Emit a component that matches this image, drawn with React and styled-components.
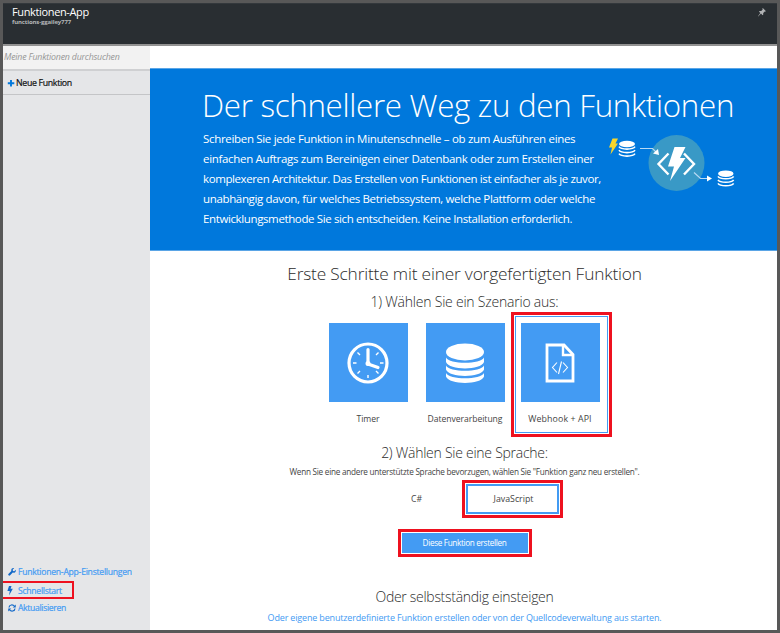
import React from 'react';
import styled, { createGlobalStyle } from 'styled-components';

const Global = createGlobalStyle`
  * { box-sizing: border-box; }
  html, body { margin: 0; padding: 0; }
  body { font-family: "Open Sans", "Noto Sans", sans-serif; background: #fff; overflow: hidden; }
  svg { display: block; flex: none; }
`;

const BLUE = '#0078dc';
const TILE = '#439bf3';
const RED = '#ee111f';

const Blade = styled.div`
  width: 780px;
  height: 633px;
  display: flex;
  flex-direction: column;
  border: 3px solid #585858;
  background: #fff;
`;

const Text = styled.span`
  display: block;
  white-space: nowrap;
  font-size: ${p => p.$size}px;
  line-height: ${p => p.$lh || 12}px;
  letter-spacing: ${p => p.$track || 0}px;
`;

const Header = styled.header`
  height: 43px;
  flex: none;
  display: flex;
  justify-content: space-between;
  padding: 1px 11px 0 9px;
  background: #292e32;
  border-top: 1px solid #33383c;
  border-bottom: 2px solid #929292;
  color: #fff;
`;

const AppName = styled(Text)`
  color: #b4b6b8;
  font-weight: 700;
`;

const Pin = styled.svg`
  margin-top: 3px;
`;

const Body = styled.div`
  flex: 1;
  display: flex;
  min-height: 0;
`;

const Sidebar = styled.nav`
  width: 147px;
  flex: none;
  display: flex;
  flex-direction: column;
  background: #e5e6e8;
`;

const Search = styled.div`
  height: 25px;
  padding: 5px 0 0 1px;
  background: #f2f2f2;
  border-bottom: 2px solid #cfd0d2;
  color: #969696;
  font-style: italic;
`;

const NewFunction = styled.div`
  height: 24px;
  display: flex;
  align-items: center;
  gap: 1px;
  padding-left: 4px;
  border-bottom: 1px solid #c4c5c7;
  color: #111;
  -webkit-text-stroke: 0.2px #111;
`;

const SideLinks = styled.div`
  margin-top: auto;
  padding-bottom: 13px;
  color: ${TILE};
  -webkit-text-stroke: 0.2px ${TILE};
`;

const SideLink = styled.div`
  height: 18px;
  width: ${p => (p.$marked ? '71px' : 'auto')};
  display: flex;
  align-items: center;
  gap: ${p => (p.$marked ? 3 : 2)}px;
  padding-left: ${p => (p.$marked ? 4 : 5)}px;
  ${p => p.$marked && `
    border: 2px solid ${RED};
    border-left: 0;
    padding-top: 2px;
  `}
`;

const Main = styled.main`
  flex: 1;
  display: flex;
  flex-direction: column;
  padding-top: 22px;
`;

const Banner = styled.section`
  height: 183px;
  flex: none;
  padding: 15px 0 0 52px;
  background: ${BLUE};
  border-top: 1px solid #5aa5e6;
  border-bottom: 1px solid #5aa5e6;
  color: #fff;
`;

const BannerTitle = styled(Text)`
  font-weight: 300;
`;

const BannerRow = styled.div`
  display: flex;
  padding-left: 1px;
`;

const Pitch = styled.div`
  width: 402px;
  padding-top: 3px;
`;

const Illustration = styled.svg`
  margin-top: 4px;
`;

const Steps = styled.section`
  display: flex;
  flex-direction: column;
  align-items: center;
  padding-left: 2px;
  color: #444;
`;

const Heading = styled(Text)`
  margin-top: ${p => p.$top}px;
  font-weight: 300;
  color: #2c2c2c;
`;

const Hint = styled(Text)`
  margin-top: 3px;
`;

const Scenarios = styled.div`
  height: 125px;
  display: flex;
  align-items: flex-start;
  margin-left: 11px;
`;

const Scenario = styled.div`
  width: 79px;
  margin: 11px ${p => p.$gap}px 0 0;
  display: flex;
  flex-direction: column;
  align-items: center;
  gap: 11px;
`;

const Marked = styled.div`
  width: 101px;
  height: 125px;
  padding: 1px;
  border: 3px solid ${RED};
`;

const Selected = styled.div`
  height: 100%;
  border: 1px solid ${TILE};
  padding: 6px 0 0 5px;
  ${Scenario} { margin: 0; }
`;

const Tile = styled.div`
  width: 79px;
  height: 79px;
  display: flex;
  align-items: center;
  justify-content: center;
  background: ${TILE};
`;

const Languages = styled.div`
  display: flex;
  align-items: center;
  gap: 40px;
  margin: 2px 0 0 45px;
`;

const MarkedLanguage = styled.div`
  width: 101px;
  height: 38px;
  padding: 1px;
  border: 3px solid ${RED};
`;

const SelectedLanguage = styled.div`
  height: 100%;
  border: 2px solid ${TILE};
  display: flex;
  align-items: center;
  justify-content: center;
  padding-left: 2px;
`;

const MarkedButton = styled.div`
  width: 134px;
  height: 28px;
  margin: 11px 0 0;
  padding: 1px;
  border: 3px solid ${RED};
`;

const CreateButton = styled.button`
  width: 100%;
  height: 100%;
  display: flex;
  align-items: center;
  justify-content: center;
  border: 0;
  padding: 0;
  background: ${TILE};
  color: #fff;
  font-family: inherit;
`;

const CustomLink = styled(Text)`
  margin-top: 5px;
  color: ${TILE};
`;

const Stack = () => (
  <svg width="38" height="40" viewBox="0 0 38 40" fill="#fff">
    <ellipse cx="19" cy="9" rx="19" ry="8.5" />
    <path d="M0 14.5c3 7 35 7 38 0v4.5c-3 8.500-35 8.500-38 0z" />
    <path d="M0 22.500c3 7 35 7 38 0v4c-3 8.500-35 8.500-38 0z" />
    <path d="M0 30c3 7 35 7 38 0v3.500c-3 8.500-35 8.500-38 0z" />
  </svg>
);

const Clock = () => (
  <svg width="42" height="42" viewBox="0 0 42 42" fill="none" stroke="#fff">
    <circle cx="21" cy="21" r="19" strokeWidth="3.2" />
    <path d="M21 7.500V22L31 25.500" strokeWidth="3.2" strokeLinecap="round" strokeLinejoin="round" />
    <circle cx="21" cy="21.500" r="1.500" strokeWidth="2" />
    <path d="M6 21h3.500M33 21h3.500M21 33v3M10.500 10.500l2.500 2.500M31.500 10.500l-2.500 2.500M10.500 31.500l2.500-2.500M31.500 31.500l-2.500-2.500" strokeWidth="1.400" />
  </svg>
);

const CodeFile = () => (
  <svg width="30" height="40" viewBox="0 0 30 40" fill="none" stroke="#fff">
    <path d="M2 2H19L28 11.500V38H2Z" strokeWidth="2.800" />
    <path d="M18 2V12H28" strokeWidth="2.400" />
    <path d="M12 19.500L7.500 24.500L12 29.500M18 19.500L22.500 24.500L18 29.500M16.500 18.500L13.500 31" strokeWidth="1.100" />
  </svg>
);

const Flow = () => (
  <Illustration width="130" height="70" viewBox="605 130 130 70">
    <path d="M612.500 138.500H618L615.500 143.500H618L610.500 154.500L612 147.500H609Z" fill="#f8d62b" />
    <g fill="#fff">
      <ellipse cx="627" cy="144" rx="8" ry="3.300" />
      <ellipse cx="725.800" cy="173.700" rx="7.700" ry="3.300" />
    </g>
    <g fill="none" stroke="#fff" strokeWidth="1.600">
      <path d="M619 146.700c2 3.200 14 3.200 16 0M619 150.200c2 3.200 14 3.200 16 0M619 153.700c2 3.200 14 3.200 16 0" />
      <path d="M718 176.400c2 3.200 13.600 3.200 15.600 0M718 179.900c2 3.200 13.600 3.200 15.600 0M718 183.400c2 3.200 13.600 3.200 15.600 0" />
    </g>
    <circle cx="676.500" cy="163" r="28" fill="#3999c6" />
    <path d="M640 148.500H652.500L656 152" fill="none" stroke="#b8daf4" strokeWidth="1.200" />
    <path d="M658 149L659 155L653 153.500Z" fill="#fff" />
    <path d="M694 172.500L700.500 178.500H707" fill="none" stroke="#b8daf4" strokeWidth="1.200" />
    <path d="M707 175.500L712 178.500L707 181.500Z" fill="#fff" />
    <path d="M668.500 153.500L658.500 164L668.500 174.500M684 153.500L694 164L684 174.500" fill="none" stroke="#fff" strokeWidth="2.400" />
    <path d="M674.500 147H685.500L680 158H685.500L670 181L674 166.500H668Z" fill="#fff" />
  </Illustration>
);

const PITCH = [
  ['Schreiben Sie jede Funktion in Minutenschnelle – ob zum Ausführen eines', -0.317],
  ['einfachen Auftrags zum Bereinigen einer Datenbank oder zum Erstellen einer', -0.317],
  ['komplexeren Architektur. Das Erstellen von Funktionen ist einfacher als je zuvor,', -0.4],
  ['unabhängig davon, für welches Betriebssystem, welche Plattform oder welche', -0.345],
  ['Entwicklungsmethode Sie sich entscheiden. Keine Installation erforderlich.', -0.377],
];

export default function App() {
  return (
    <Blade>
      <Global />
      <Header>
        <div>
          <Text $size={11} $lh={14} $track={-0.36}>Funktionen-App</Text>
          <AppName $size={6} $lh={7} $track={-0.13}>functions-ggailey777</AppName>
        </div>
        <Pin width="8" height="9" viewBox="0 0 8 9" fill="#b0b2b4">
          <path d="M4.800 0L8 3.200L7.300 3.600L6.800 3.400L5.200 5L5.200 6.800L4.600 7.200L3 5.600L0.200 8.600L0 8.300L2.300 5L1 3.500L1.500 3L3.200 3L4.700 1.400L4.400 0.600Z" />
        </Pin>
      </Header>
      <Body>
        <Sidebar>
          <Search>
            <Text $size={8.8} $track={-0.2}>Meine Funktionen durchsuchen</Text>
          </Search>
          <NewFunction>
            <svg width="8" height="8" viewBox="0 0 8 8">
              <path d="M4 1V7.500M0.800 4.200H7.300" stroke={BLUE} strokeWidth="1.900" />
            </svg>
            <Text $size={8.8} $track={-0.33}>Neue Funktion</Text>
          </NewFunction>
          <SideLinks>
            <SideLink>
              <svg width="8" height="8" viewBox="0 0 16 16" fill="#1268c8">
                <path d="M15.500 3.500L12.500 6.300L9.800 5.800L9.500 3.200L12.300.500C9.500-.500 6.300 1.500 6.500 5L6.700 6.200L.700 12C-.500 13.500 2 16.200 3.800 15L9.500 9.200C13 10.500 16.500 7.500 15.500 3.500Z" />
              </svg>
              <Text $size={8.6} $track={-0.24}>Funktionen-App-Einstellungen</Text>
            </SideLink>
            <SideLink $marked>
              <svg width="8" height="10" viewBox="0 0 8 10" fill="#1268c8">
                <path d="M2 0H4.500L3.600 2.800H5.800L2 9.500L2.800 5H0.400Z" />
              </svg>
              <Text $size={8.6} $track={-0.26}>Schnellstart</Text>
            </SideLink>
            <SideLink>
              <svg width="8" height="8" viewBox="0 0 16 16" fill="none" stroke="#1268c8" strokeWidth="2.400">
                <path d="M2 7C2.500 1 10 .500 13 4.500M14 9C13.500 15 6 15.500 3 11.500" />
                <path d="M15.500 1V7H9.500ZM.500 15V9H6.500Z" fill="#1268c8" stroke="none" />
              </svg>
              <Text $size={8.6} $track={-0.32}>Aktualisieren</Text>
            </SideLink>
          </SideLinks>
        </Sidebar>
        <Main>
          <Banner>
            <BannerTitle $size={31.3} $lh={42} $track={-0.3}>Der schnellere Weg zu den Funktionen</BannerTitle>
            <BannerRow>
              <Pitch>
                {PITCH.map(([line, track]) => (
                  <Text key={line} $size={11.5} $lh={20} $track={track}>{line}</Text>
                ))}
              </Pitch>
              <Flow />
            </BannerRow>
          </Banner>
          <Steps>
            <Heading $top={11} $size={17.3} $lh={24} $track={-0.17}>Erste Schritte mit einer vorgefertigten Funktion</Heading>
            <Heading $top={6} $size={14} $lh={20} $track={-0.22}>1) Wählen Sie ein Szenario aus:</Heading>
            <Scenarios>
              <Scenario $gap={18}>
                <Tile><Clock /></Tile>
                <Text $size={8.6} $track={-0.04}>Timer</Text>
              </Scenario>
              <Scenario $gap={6}>
                <Tile><Stack /></Tile>
                <Text $size={8.6} $track={-0.04}>Datenverarbeitung</Text>
              </Scenario>
              <Marked>
                <Selected>
                  <Scenario>
                    <Tile><CodeFile /></Tile>
                    <Text $size={8.8} $track={0.1}>Webhook + API</Text>
                  </Scenario>
                </Selected>
              </Marked>
            </Scenarios>
            <Heading $top={6} $size={14} $lh={20} $track={-0.26}>2) Wählen Sie eine Sprache:</Heading>
            <Hint $size={8.2} $track={-0.25}>Wenn Sie eine andere unterstützte Sprache bevorzugen, wählen Sie "Funktion ganz neu erstellen".</Hint>
            <Languages>
              <Text $size={8.6}>C#</Text>
              <MarkedLanguage>
                <SelectedLanguage>
                  <Text $size={8.8}>JavaScript</Text>
                </SelectedLanguage>
              </MarkedLanguage>
            </Languages>
            <MarkedButton>
              <CreateButton>
                <Text $size={8.2} $track={-0.34}>Diese Funktion erstellen</Text>
              </CreateButton>
            </MarkedButton>
            <Heading $top={30} $size={14} $lh={20} $track={-0.29}>Oder selbstständig einsteigen</Heading>
            <CustomLink $size={9} $track={-0.165}>Oder eigene benutzerdefinierte Funktion erstellen oder von der Quellcodeverwaltung aus starten.</CustomLink>
          </Steps>
        </Main>
      </Body>
    </Blade>
  );
}
